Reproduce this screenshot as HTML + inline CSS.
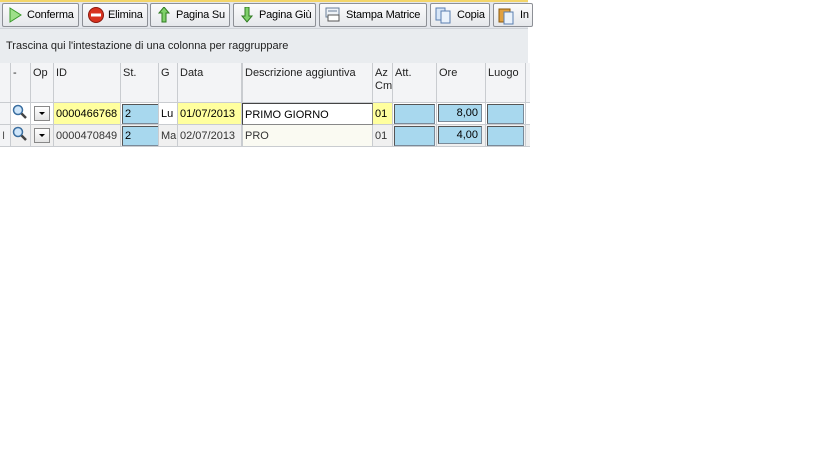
<!DOCTYPE html>
<html><head><meta charset="utf-8"><style>
body{margin:0;width:819px;height:460px;background:#fff;font-family:"Liberation Sans",sans-serif;font-size:11px;color:#000;position:relative;overflow:hidden}
.tb{position:absolute;left:0;top:0;width:528px;height:28px;background:#e4e7ec;border-top:2px solid #f3d56a;box-sizing:border-box}
.btn{position:absolute;top:1px;height:24px;border:1px solid #8d9096;border-radius:2px;background:linear-gradient(#fbfbfc,#e6e8eb);box-sizing:border-box;line-height:22px;font-size:11px;white-space:nowrap;overflow:hidden;letter-spacing:-0.2px}
.btn svg{position:absolute;left:4px;top:3px}
.grp{position:absolute;left:0;top:28px;width:528px;height:35px;background:#e9ecef;border-top:1px solid #cfd3d8;box-sizing:border-box;padding:11px 6px;font-size:11px;color:#222}
.c{position:absolute;box-sizing:border-box;border-right:1px solid #c9ccd0;border-bottom:1px solid #c9ccd0;padding:2px 2px;font-size:11px;white-space:nowrap;overflow:hidden}
.h{top:63px;height:40px;background:#f3f4f6;padding-top:4px;color:#222}
.r1{top:103px;height:22px;line-height:18px}
.r2{top:125px;height:22px;line-height:18px}
.box{position:absolute;background:#a8d8ee;border:1px solid #7a8a99;border-top-color:#555;border-left-color:#555}
</style></head><body>
<div class="tb">
<div class="btn" style="left:2px;width:77px;padding-left:24px"><svg width="16" height="16"><path d="M3 1 L14 8 L3 15Z" fill="#9ee08a" stroke="#3a9a2a"/></svg>Conferma</div>
<div class="btn" style="left:82px;width:66px;padding-left:25px"><svg width="18" height="18"><circle cx="9" cy="8" r="7.5" fill="#d8321e" stroke="#8a1a10"/><rect x="4" y="6.5" width="10" height="3" fill="#fff"/></svg>Elimina</div>
<div class="btn" style="left:150px;width:80px;padding-left:25px"><svg width="16" height="16" style="left:6px"><path d="M5 15 V6 H2 L7 0 L12 6 H9 V15Z" fill="#7fd06a" stroke="#2f7a20"/></svg>Pagina Su</div>
<div class="btn" style="left:233px;width:83px;padding-left:25px"><svg width="16" height="16" style="left:6px"><path d="M5 0 V9 H2 L7 15 L12 9 H9 V0Z" fill="#7fd06a" stroke="#2f7a20"/></svg>Pagina Giù</div>
<div class="btn" style="left:319px;width:108px;padding-left:26px"><svg width="18" height="16"><rect x="2" y="1" width="13" height="9" fill="#eef2f7" stroke="#6a7f99"/><rect x="4" y="8" width="11" height="6" fill="#fff" stroke="#555"/><line x1="4" y1="4" x2="13" y2="4" stroke="#6a7f99"/></svg>Stampa Matrice</div>
<div class="btn" style="left:430px;width:60px;padding-left:26px"><svg width="18" height="18"><rect x="1" y="1" width="9" height="12" fill="#d8e6f7" stroke="#5a7fb0"/><rect x="6" y="4" width="9" height="12" fill="#eaf2fb" stroke="#5a7fb0"/></svg>Copia</div>
<div class="btn" style="left:493px;width:40px;padding-left:26px"><svg width="18" height="18"><rect x="1" y="2" width="11" height="13" fill="#e0a040" stroke="#8a5a10"/><rect x="6" y="5" width="9" height="12" fill="#eaf2fb" stroke="#5a7fb0"/></svg>In</div>
</div>
<div class="grp">Trascina qui l'intestazione di una colonna per raggruppare</div>

<div class="c h" style="left:0;width:11px"></div>
<div class="c h" style="left:11px;width:20px">-</div>
<div class="c h" style="left:31px;width:23px">Op</div>
<div class="c h" style="left:54px;width:67px">ID</div>
<div class="c h" style="left:121px;width:38px">St.</div>
<div class="c h" style="left:159px;width:19px">G</div>
<div class="c h" style="left:178px;width:64px">Data</div>
<div class="c h" style="left:242px;width:131px;border-left:1px solid #c9ccd0">Descrizione aggiuntiva</div>
<div class="c h" style="left:373px;width:20px;line-height:13px">Az<br>Cm</div>
<div class="c h" style="left:393px;width:44px">Att.</div>
<div class="c h" style="left:437px;width:49px">Ore</div>
<div class="c h" style="left:486px;width:40px">Luogo</div>
<div class="c h" style="left:526px;width:2px;border-right:none"></div>

<!-- row 1 -->
<div class="c r1" style="left:0;width:11px;background:#f3f4f6"></div>
<div class="c r1" style="left:11px;width:20px;background:#fff"><svg width="16" height="16" style="position:absolute;left:1px;top:1px"><circle cx="6" cy="6" r="4.5" fill="#cfe6fa" stroke="#3a6ea0" stroke-width="1.5"/><line x1="9.5" y1="9.5" x2="14" y2="14" stroke="#444" stroke-width="2.5"/></svg></div>
<div class="c r1" style="left:31px;width:23px;background:#fff"><div style="position:absolute;left:3px;top:3px;width:14px;height:13px;border:1px solid #888;background:linear-gradient(#fff,#e4e4e4)"><div style="position:absolute;left:4px;top:5px;border:3px solid transparent;border-top:3px solid #000"></div></div></div>
<div class="c r1" style="left:54px;width:67px;background:#ffff9e">0000466768</div>
<div class="c r1" style="left:121px;width:38px;background:#fff"><div class="box" style="left:1px;top:1px;width:33px;height:18px;padding-left:2px;line-height:18px">2</div></div>
<div class="c r1" style="left:159px;width:19px;background:#fff">Lu</div>
<div class="c r1" style="left:178px;width:64px;background:#ffff9e">01/07/2013</div>
<div class="c r1" style="left:242px;width:131px;background:#fff;border:1px solid #888;border-top-color:#444;border-left-color:#444">PRIMO GIORNO</div>
<div class="c r1" style="left:373px;width:20px;background:#ffff9e">01</div>
<div class="c r1" style="left:393px;width:44px;background:#fff"><div class="box" style="left:1px;top:1px;width:39px;height:18px"></div></div>
<div class="c r1" style="left:437px;width:49px;background:#fff"><div class="box" style="left:1px;top:1px;width:44px;height:18px;text-align:right;padding-right:3px;box-sizing:border-box;line-height:16px">8,00</div></div>
<div class="c r1" style="left:486px;width:40px;background:#fff"><div class="box" style="left:1px;top:1px;width:35px;height:18px"></div></div>
<div class="c r1" style="left:526px;width:2px;background:#fff;border-right:none"></div>

<!-- row 2 -->
<div class="c r2" style="left:0;width:11px;background:#f3f4f6;color:#555;padding:2px 0 0 2px">I</div>
<div class="c r2" style="left:11px;width:20px;background:#f0f0f0"><svg width="16" height="16" style="position:absolute;left:1px;top:1px"><circle cx="6" cy="6" r="4.5" fill="#cfe6fa" stroke="#3a6ea0" stroke-width="1.5"/><line x1="9.5" y1="9.5" x2="14" y2="14" stroke="#444" stroke-width="2.5"/></svg></div>
<div class="c r2" style="left:31px;width:23px;background:#f0f0f0"><div style="position:absolute;left:3px;top:3px;width:14px;height:13px;border:1px solid #888;background:linear-gradient(#fff,#e4e4e4)"><div style="position:absolute;left:4px;top:5px;border:3px solid transparent;border-top:3px solid #000"></div></div></div>
<div class="c r2" style="left:54px;width:67px;background:#f0f0f0;color:#333">0000470849</div>
<div class="c r2" style="left:121px;width:38px;background:#f0f0f0"><div class="box" style="left:1px;top:1px;width:33px;height:18px;padding-left:2px;line-height:18px">2</div></div>
<div class="c r2" style="left:159px;width:19px;background:#f0f0f0;color:#333">Ma</div>
<div class="c r2" style="left:178px;width:64px;background:#f0f0f0;color:#333">02/07/2013</div>
<div class="c r2" style="left:242px;width:131px;background:#fafaf2;border-left:1px solid #c9ccd0;color:#333">PRO</div>
<div class="c r2" style="left:373px;width:20px;background:#f0f0f0;color:#333">01</div>
<div class="c r2" style="left:393px;width:44px;background:#f0f0f0"><div class="box" style="left:1px;top:1px;width:39px;height:18px"></div></div>
<div class="c r2" style="left:437px;width:49px;background:#f0f0f0"><div class="box" style="left:1px;top:1px;width:44px;height:18px;text-align:right;padding-right:3px;box-sizing:border-box;line-height:16px">4,00</div></div>
<div class="c r2" style="left:486px;width:40px;background:#f0f0f0"><div class="box" style="left:1px;top:1px;width:35px;height:18px"></div></div>
<div class="c r2" style="left:526px;width:2px;background:#f0f0f0;border-right:none"></div>
</body></html>
